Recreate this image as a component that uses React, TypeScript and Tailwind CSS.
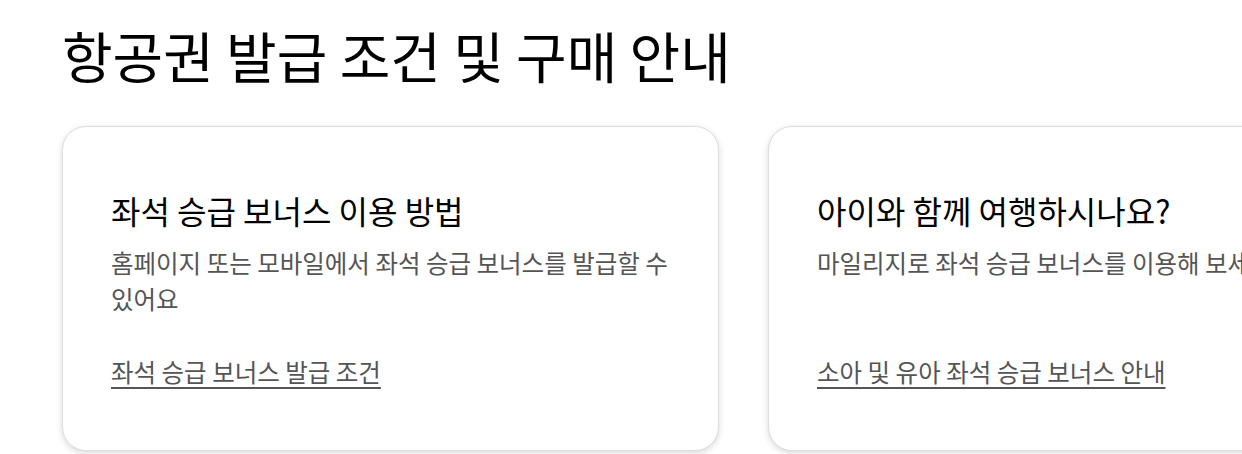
import React from 'react';

const cards = [
  {
    title: '좌석 승급 보너스 이용 방법',
    desc: '홈페이지 또는 모바일에서 좌석 승급 보너스를 발급할 수 있어요',
    link: '좌석 승급 보너스 발급 조건',
  },
  {
    title: '아이와 함께 여행하시나요?',
    desc: '마일리지로 좌석 승급 보너스를 이용해 보세요',
    link: '소아 및 유아 좌석 승급 보너스 안내',
  },
];

const App = () => {
  return (
    <div
      className="w-[1242px] h-[454px] overflow-hidden bg-white text-black"
      style={{ fontFamily: '"Noto Sans CJK KR", "Noto Sans", sans-serif' }}
    >
      <div className="pl-[62px] pt-[14px]">
        <h1 className="text-[55px] leading-[80px] font-normal">
          항공권 발급 조건 및 구매 안내
        </h1>

        {/* Cards row */}
        <div className="flex gap-[49px] mt-[32px]">
          {cards.map((c) => (
            <div
              key={c.title}
              className="w-[657px] h-[325px] shrink-0 rounded-[24px] border border-[#dddddd] bg-white shadow-[0_2px_6px_rgba(0,0,0,0.15)] px-[48px] pt-[61px] flex flex-col"
            >
              <h2 className="text-[32px] leading-[44px] font-normal">{c.title}</h2>
              <p className="mt-[13px] text-[24.5px] leading-[36px] text-[#555555] h-[72px]">
                {c.desc}
              </p>
              <a href="#" className="mt-[37px] text-[24.5px] leading-[36px] text-[#555555] underline underline-offset-[5px] self-start">
                {c.link}
              </a>
            </div>
          ))}
        </div>
      </div>
    </div>
  );
};

export default App;
